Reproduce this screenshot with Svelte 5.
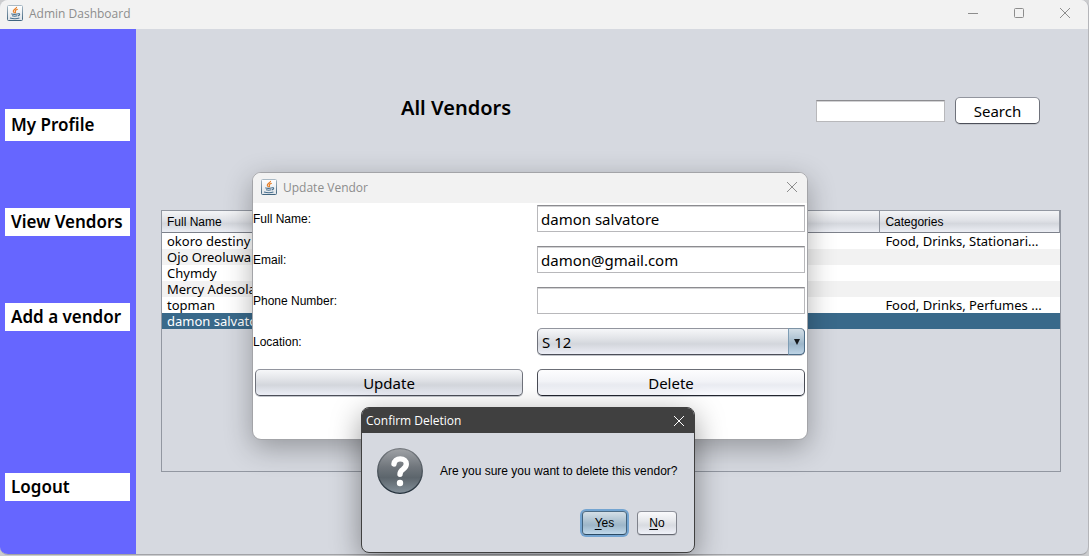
<script>
  const nav = ['My Profile', 'View Vendors', 'Add a vendor'];

  let query = $state('');
  let form = $state({
    name: 'damon salvatore',
    email: 'damon@gmail.com',
    phone: '',
    location: 'S 12'
  });

  const columns = ['Full Name', '', '', '', 'Categories'];
  const vendors = [
    { name: 'okoro destiny', categories: 'Food, Drinks, Stationari...' },
    { name: 'Ojo Oreoluwa', categories: '' },
    { name: 'Chymdy', categories: '' },
    { name: 'Mercy Adesola', categories: '' },
    { name: 'topman', categories: 'Food, Drinks, Perfumes ...' },
    { name: 'damon salvatore', categories: '' }
  ];
  const selected = 5;
</script>

{#snippet javaIcon()}
  <svg class="java" viewBox="0 0 16 16" width="16" height="16" aria-hidden="true">
    <defs>
      <linearGradient id="tile" x1="0" y1="0" x2="0" y2="1">
        <stop offset="0" stop-color="#ffffff" />
        <stop offset="1" stop-color="#dfe4e9" />
      </linearGradient>
      <linearGradient id="rim" x1="0" y1="0" x2="0" y2="1">
        <stop offset="0" stop-color="#a9b9c5" />
        <stop offset="1" stop-color="#41657f" />
      </linearGradient>
    </defs>
    <rect x="0.5" y="0.5" width="15" height="15" rx="1" fill="url(#tile)" stroke="url(#rim)" />
    <path d="M9.6 1.8C10 3.6 6 4.3 6.3 6.2c.1.8 1 1.2 1 2M10.8 4.2C8.6 4.9 7.9 5.6 8.4 6.5c.3.6.2 1-.3 1.6" fill="none" stroke="#e8812a" stroke-width="1.2" />
    <path d="M4.3 8.8c1.5.6 4.7.6 6.6 0M5 10.8c1.7.5 3.8.5 5.2 0M3 13c2.6.8 7.2.8 9.4 0M11.2 8.7c2-.5 2 1.6-.4 2.2" fill="none" stroke="#48708f" stroke-width="1.1" />
  </svg>
{/snippet}

{#snippet cross()}
  <svg viewBox="0 0 12 12" width="12" height="12" aria-hidden="true">
    <path d="M1 1 11 11M11 1 1 11" fill="none" stroke="currentColor" />
  </svg>
{/snippet}

<div class="desktop">
  <div class="window">
    <header class="titlebar">
      {@render javaIcon()}
      <span class="caption">Admin Dashboard</span>
      <div class="controls">
        <button type="button" aria-label="Minimize">
          <svg viewBox="0 0 12 12" width="12" height="12"><path d="M1 6.5h10" stroke="currentColor" /></svg>
        </button>
        <button type="button" aria-label="Maximize">
          <svg viewBox="0 0 12 12" width="12" height="12"><rect x="1.5" y="1.5" width="9" height="9" rx="1" fill="none" stroke="currentColor" /></svg>
        </button>
        <button type="button" aria-label="Close">{@render cross()}</button>
      </div>
    </header>

    <div class="body">
      <nav>
        {#each nav as item}
          <button type="button">{item}</button>
        {/each}
        <button type="button" class="logout">Logout</button>
      </nav>

      <main>
        <div class="top">
          <h1>All Vendors</h1>
          <form class="search" onsubmit={(e) => e.preventDefault()}>
            <input class="field" type="text" aria-label="Search" bind:value={query} />
            <button class="btn light" type="submit">Search</button>
          </form>
        </div>

        <div class="panel">
          <table>
            <thead>
              <tr>
                {#each columns as c}<th>{c}</th>{/each}
              </tr>
            </thead>
            <tbody>
              {#each vendors as v, i}
                <tr class:selected={i === selected}>
                  <td>{v.name}</td>
                  <td></td>
                  <td></td>
                  <td></td>
                  <td>{v.categories}</td>
                </tr>
              {/each}
            </tbody>
          </table>
        </div>
      </main>
    </div>
  </div>

  <section class="update" role="dialog" aria-labelledby="update-title">
    <header class="titlebar">
      {@render javaIcon()}
      <span class="caption" id="update-title">Update Vendor</span>
      <div class="controls"><button type="button" aria-label="Close">{@render cross()}</button></div>
    </header>
    <form class="grid" onsubmit={(e) => e.preventDefault()}>
      <label for="name">Full Name:</label>
      <input class="field" id="name" type="text" bind:value={form.name} />
      <label for="email">Email:</label>
      <input class="field" id="email" type="text" bind:value={form.email} />
      <label for="phone">Phone Number:</label>
      <input class="field" id="phone" type="text" bind:value={form.phone} />
      <label for="location">Location:</label>
      <div class="combo">
        <select id="location" bind:value={form.location}>
          <option>S 12</option>
        </select>
        <span class="arrow" aria-hidden="true">
          <svg viewBox="0 0 8 6" width="8" height="6"><path d="M1 0h6L4 6z" fill="#14181c" /></svg>
        </span>
      </div>
      <button class="btn" type="submit">Update</button>
      <button class="btn hover" type="button">Delete</button>
    </form>
  </section>

  <section class="confirm" role="alertdialog" aria-labelledby="confirm-title">
    <header class="darkbar">
      <span id="confirm-title">Confirm Deletion</span>
      <button type="button" aria-label="Close">{@render cross()}</button>
    </header>
    <div class="message">
      <svg viewBox="0 0 46 46" width="46" height="46" aria-hidden="true">
        <defs>
          <linearGradient id="ball" x1="0" y1="0" x2="0" y2="1">
            <stop offset="0" stop-color="#a0a3a7" />
            <stop offset="0.4" stop-color="#71777d" />
            <stop offset="0.65" stop-color="#5c656c" />
            <stop offset="1" stop-color="#84909a" />
          </linearGradient>
          <linearGradient id="ring" x1="0" y1="0" x2="0" y2="1">
            <stop offset="0" stop-color="#777b80" />
            <stop offset="1" stop-color="#222f3a" />
          </linearGradient>
        </defs>
        <circle cx="23" cy="23" r="22.3" fill="url(#ball)" stroke="url(#ring)" stroke-width="1.3" />
        <path d="M17 16c.2-3.1 2.8-5.1 6.2-5.1 3.7 0 6.1 2 6.1 5 0 2.7-1.5 4-3.4 5.5-1.9 1.4-2.9 2.5-2.9 4.8" fill="none" stroke="#fff" stroke-width="5.4" stroke-linecap="round" stroke-linejoin="round" />
        <circle cx="23" cy="35" r="3.2" fill="#fff" />
      </svg>
      <p>Are you sure you want to delete this vendor?</p>
    </div>
    <div class="answers">
      <button class="yes" type="button"><u>Y</u>es</button>
      <button class="no" type="button"><u>N</u>o</button>
    </div>
  </section>
</div>

<style>
  :global(body) {
    margin: 0;
    background: #cbccce;
  }

  .desktop {
    --ui: 'Liberation Sans', Arial, sans-serif;
    --human: 'Trebuchet MS', 'Noto Sans', sans-serif;
    --caption: 'Segoe UI', 'Open Sans', sans-serif;
    position: relative;
    box-sizing: border-box;
    height: 100vh;
    min-height: 540px;
    padding: 0 0 1px;
    overflow: hidden;
    color: #000;
    font: 12px var(--ui);
  }

  .desktop *,
  .desktop *::before {
    box-sizing: border-box;
  }

  button,
  input,
  select {
    margin: 0;
    font: inherit;
    color: inherit;
  }

  .window {
    display: flex;
    flex-direction: column;
    height: 100%;
    overflow: hidden;
    background: #d6d9e0;
    border-bottom: 1px solid #a2a3a7;
    border-right: 1px solid #b4b5b9;
    border-radius: 8px;
  }

  .titlebar {
    display: flex;
    flex: none;
    align-items: center;
    height: 29px;
    padding: 0 0 3px 7px;
    background: #f2f2f2;
    color: #8d8d8d;
    font: 12px var(--caption);
  }

  .java {
    margin-right: 6px;
  }

  .controls {
    display: flex;
    margin-left: auto;
  }

  .controls button,
  .darkbar button {
    display: flex;
    align-items: center;
    justify-content: center;
    width: 46px;
    height: 26px;
    padding: 0;
    border: 0;
    background: none;
  }

  .body {
    display: flex;
    flex: 1;
    min-height: 0;
  }

  nav {
    display: flex;
    flex: none;
    flex-direction: column;
    gap: 67px;
    width: 136px;
    padding: 80px 6px 53px 5px;
    background: #6666ff;
  }

  nav button {
    height: 28px;
    padding: 0 0 0 6px;
    border: 0;
    background: #fff;
    font: 600 17px var(--human);
    line-height: 28px;
    text-align: left;
    white-space: nowrap;
  }

  nav button:first-child {
    height: 32px;
  }

  nav .logout {
    margin-top: auto;
  }

  main {
    display: flex;
    flex: 1;
    flex-direction: column;
    min-width: 0;
    padding: 63px 27px 82px 25px;
  }

  .top {
    display: flex;
    align-items: flex-start;
    justify-content: space-between;
    height: 32px;
    padding: 0 21px 0 240px;
  }

  h1 {
    margin: 0;
    font: 600 20px var(--human);
    line-height: 32px;
  }

  .search {
    display: flex;
    align-items: center;
    gap: 10px;
    padding-top: 5px;
  }

  .field {
    height: 27px;
    padding: 0 3px;
    border: 1px solid #b8b8bb;
    border-top-color: #8c8c90;
    border-radius: 0;
    background: #fff;
    box-shadow: inset 0 1px 0 #d2d2d4;
    outline: 0;
    font: 15px var(--human);
  }

  .search .field {
    width: 129px;
    height: 22px;
  }

  .btn {
    height: 27px;
    padding: 0;
    border: 1px solid #6a6d76;
    border-color: #92959e #6f727b #4c4f59;
    border-radius: 5px;
    background: linear-gradient(#f6f7f9, #e3e5e9 35%, #d3d6dc 60%, #eceef6);
    box-shadow: 0 1px 0 #c2c5cb;
    font: 15px var(--human);
    line-height: 24px;
  }

  .search .btn {
    width: 85px;
  }

  .btn.light {
    background: #fff;
  }

  .btn.hover {
    border-color: #6b6e76 #484b54 #23262f;
    background: linear-gradient(#fdfdfe, #f2f3f7 45%, #e9ebf1 60%, #fafbff);
  }

  .panel {
    flex: 1;
    min-height: 0;
    margin-top: 86px;
    border: 1px solid #9297a1;
    overflow: hidden;
  }

  table {
    width: 100%;
    border-collapse: separate;
    border-spacing: 0;
    table-layout: fixed;
  }

  th {
    height: 22px;
    padding: 0 5px;
    background: linear-gradient(#f4f5f7, #e0e2e7 45%, #d4d7dd 60%, #eceef4);
    border-right: 1px solid #9297a1;
    border-bottom: 1px solid #7d818b;
    font: 12px var(--ui);
    text-align: left;
  }

  td {
    height: 16px;
    padding: 0 0 0 5px;
    font: 13px var(--human);
    line-height: 16px;
    white-space: nowrap;
    overflow: hidden;
  }

  tbody tr {
    background: #fff;
  }

  tbody tr:nth-child(even) {
    background: #f2f2f2;
  }

  tbody tr.selected {
    background: #39698a;
    color: #fff;
  }

  .update {
    position: absolute;
    top: 172px;
    left: 252px;
    width: 556px;
    height: 268px;
    overflow: hidden;
    border: 1px solid #a3a4a8;
    border-radius: 9px;
    background: #fff;
    box-shadow: 0 8px 28px rgba(0, 0, 0, 0.3);
  }

  .update .titlebar {
    height: 30px;
    padding: 0 0 2px 8px;
  }

  .update .controls button {
    width: 30px;
  }

  .grid {
    display: grid;
    grid-template-columns: 1fr 1fr;
    gap: 14px;
    padding: 2px;
  }

  .grid label {
    margin-left: -2px;
    line-height: 28px;
    height: 27px;
  }

  .grid > * {
    min-width: 0;
  }

  .combo {
    position: relative;
    height: 27px;
  }

  .combo select {
    width: 100%;
    height: 100%;
    padding: 0 22px 0 4px;
    border: 1px solid;
    border-color: #92959e #6f727b #4c4f59;
    border-radius: 5px;
    background: linear-gradient(#f6f7f9, #e3e5e9 35%, #d3d6dc 60%, #eceef6);
    box-shadow: 0 1px 0 #c2c5cb;
    appearance: none;
    font: 15px var(--human);
  }

  .combo .arrow {
    position: absolute;
    top: 0;
    right: 0;
    display: flex;
    align-items: center;
    justify-content: center;
    width: 17px;
    height: 27px;
    border: 1px solid #4d6d88;
    border-top-color: #7d93a5;
    border-left-color: #7e9db5;
    border-radius: 0 5px 5px 0;
    background: linear-gradient(#d3dee7, #abc1d1 45%, #9cb5c9 60%, #bdd4e6);
    pointer-events: none;
  }

  .confirm {
    position: absolute;
    top: 407px;
    left: 361px;
    width: 334px;
    height: 146px;
    overflow: hidden;
    border: 1px solid #404040;
    border-radius: 8px;
    background: #d6d9e0;
    box-shadow: 0 8px 30px rgba(0, 0, 0, 0.4);
  }

  .darkbar {
    display: flex;
    align-items: center;
    justify-content: space-between;
    height: 25px;
    padding-left: 4px;
    background: #404040;
    color: #fff;
    font: 12px var(--caption);
  }

  .darkbar button {
    width: 30px;
  }

  .message {
    display: flex;
    align-items: center;
    gap: 17px;
    padding: 15px 15px 0;
  }

  .message p {
    margin: 0;
    white-space: nowrap;
  }

  .answers {
    display: flex;
    justify-content: flex-end;
    gap: 10px;
    padding: 17px 17px 0;
  }

  .answers button {
    height: 24px;
    padding: 0;
    border-width: 1px;
    border-style: solid;
    border-radius: 4px;
  }

  .answers u {
    text-underline-offset: 2px;
  }

  .yes {
    width: 45px;
    border-color: #4c6b85 #41627d #2b4a64;
    background: linear-gradient(#d5dfe7, #a9bfcf 45%, #9db6c9 60%, #c0d8ea);
    box-shadow: 0 0 0 2px #73a4d1;
  }

  .no {
    width: 40px;
    border-color: #92959e #7f828b #656872;
    background: linear-gradient(#fafafc, #e6e8ec 40%, #d8dbe1 60%, #f0f2f9);
    box-shadow: 0 1px 0 #c2c5cb;
  }
</style>
